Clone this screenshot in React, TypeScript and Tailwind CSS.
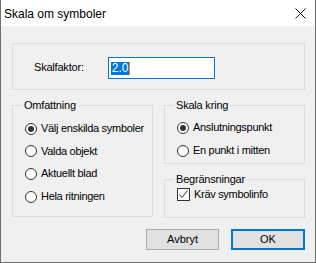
import React from "react";

const font = { fontFamily: '"Liberation Sans", Arial, sans-serif' };

function Radio({ checked }: { checked?: boolean }) {
  return (
    <span className="flex h-[12px] w-[12px] items-center justify-center rounded-full border border-[#333333] bg-white">
      {checked && <span className="h-[6px] w-[6px] rounded-full bg-[#333333]" />}
    </span>
  );
}

function RadioRow({ label, checked, h }: { label: string; checked?: boolean; h: string }) {
  return (
    <div className={`flex items-center ${h}`}>
      <Radio checked={checked} />
      <span className="ml-[4px] text-[11px] leading-none tracking-[-0.3px] text-black">{label}</span>
    </div>
  );
}

export default function App() {
  return (
    <div className="w-[316px] h-[263px] flex flex-col border-x border-b border-[#6f6f6f] bg-[#f0f0f0]" style={font}>
      <div className="h-[26px] bg-white flex items-center justify-between pl-[3px] pr-[9px] shrink-0">
        <span className="text-[12px] text-black leading-none mt-[1px]">Skala om symboler</span>
        <svg width="11" height="11" viewBox="0 0 11 11" className="mt-[1px]">
          <path d="M0.5 0.5 L10.5 10.5 M10.5 0.5 L0.5 10.5" stroke="#111" strokeWidth="1" />
        </svg>
      </div>
      <div className="flex-1 flex flex-col pl-[11px] pr-[10px]">
        <div className="mt-[17px] h-[47px] border border-[#dcdcdc] flex items-start">
          <span className="mt-[18px] ml-[21px] text-[11px] leading-none tracking-[-0.2px] text-black">Skalfaktor:</span>
          <div className="ml-[24px] mt-[13px] h-[22px] w-[107px] border border-[#0078d7] bg-white flex items-center pl-[2px]">
            <span className="bg-[#0078d7] text-white text-[12px] leading-[13px] h-[13px] px-[1px]">2.0</span>
            <span className="h-[13px] w-[1px] bg-[#d98a2b]" />
          </div>
        </div>
        <div className="mt-[9px] flex">
          <fieldset className="w-[141px] h-[118px] border border-[#dcdcdc] pl-[12px]">
            <legend className="ml-[-3px] px-[2px] text-[11px] leading-[12px] tracking-[-0.2px] text-black">Omfattning</legend>
            <div className="mt-[6px] flex flex-col">
              <RadioRow label="Välj enskilda symboler" checked h="h-[23px]" />
              <RadioRow label="Valda objekt" h="h-[22px]" />
              <RadioRow label="Aktuellt blad" h="h-[23px]" />
              <RadioRow label="Hela ritningen" h="h-[23px]" />
            </div>
          </fieldset>
          <div className="ml-[11px] flex flex-col">
            <fieldset className="w-[141px] h-[65px] border border-[#dcdcdc] pl-[12px]">
              <legend className="ml-[-3px] px-[2px] text-[11px] leading-[12px] tracking-[-0.2px] text-black">Skala kring</legend>
              <div className="mt-[5px] flex flex-col">
                <RadioRow label="Anslutningspunkt" checked h="h-[23px]" />
                <RadioRow label="En punkt i mitten" h="h-[23px]" />
              </div>
            </fieldset>
            <fieldset className="mt-[9px] w-[141px] h-[45px] border border-[#dcdcdc] pl-[12px]">
              <legend className="ml-[-3px] px-[2px] text-[11px] leading-[12px] tracking-[-0.2px] text-black">Begränsningar</legend>
              <div className="mt-[3px] flex items-center">
                <span className="flex h-[13px] w-[13px] items-center justify-center border border-[#333333] bg-white">
                  <svg width="11" height="11" viewBox="0 0 11 11">
                    <path d="M1.5 5.5 L4 8.5 L9.5 1.5" fill="none" stroke="#333" strokeWidth="1" />
                  </svg>
                </span>
                <span className="ml-[4px] text-[11px] leading-none tracking-[-0.3px] text-black">Kräv symbolinfo</span>
              </div>
            </fieldset>
          </div>
        </div>
        <div className="mt-[11px] flex justify-end">
          <button className="h-[21px] w-[73px] border border-[#adadad] bg-[#e1e1e1] text-[11px] text-black leading-none">Avbryt</button>
          <button className="ml-[12px] h-[21px] w-[74px] border-2 border-[#0078d7] bg-[#e1e1e1] text-[11px] text-black leading-none">OK</button>
        </div>
      </div>
    </div>
  );
}
